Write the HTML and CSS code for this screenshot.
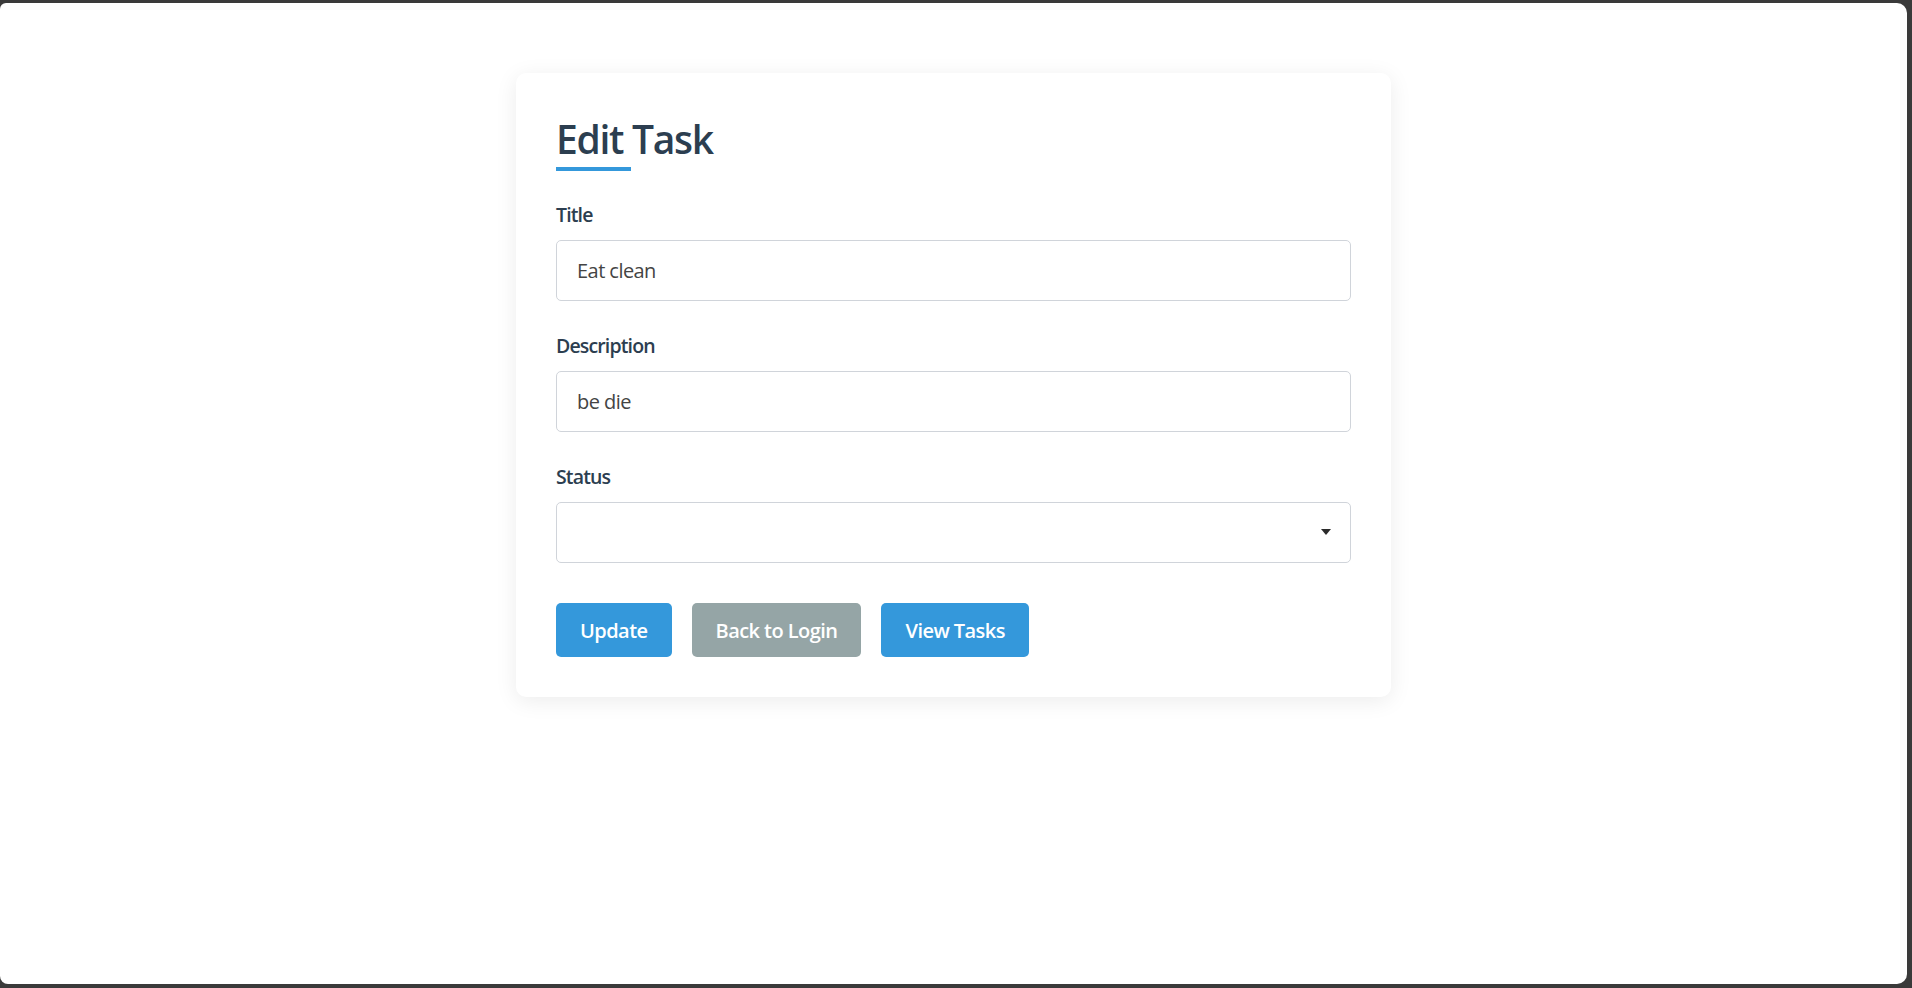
FILE: index.html
```html
<!DOCTYPE html>
<html lang="en">
<head>
<meta charset="utf-8">
<title>Edit Task</title>
<link rel="stylesheet" href="styles.css">
</head>
<body>
<div class="window">
  <main class="page">
    <section class="card">
      <h1 class="card-title">Edit Task</h1>
      <form class="form">
        <div class="form-group">
          <label class="form-label" for="title">Title</label>
          <input class="form-control" id="title" type="text" value="Eat clean">
        </div>
        <div class="form-group">
          <label class="form-label" for="desc">Description</label>
          <input class="form-control" id="desc" type="text" value="be die">
        </div>
        <div class="form-group">
          <label class="form-label" for="status">Status</label>
          <div class="select-wrap">
            <select class="form-control form-select" id="status">
              <option value=""></option>
            </select>
            <svg class="select-arrow" width="10" height="6" viewBox="0 0 10 6"><path d="M0 0H10L5 6Z" fill="#2b2b2b"/></svg>
          </div>
        </div>
        <div class="actions">
          <button type="button" class="btn btn-primary">Update</button>
          <button type="button" class="btn btn-secondary">Back to Login</button>
          <button type="button" class="btn btn-primary">View Tasks</button>
        </div>
      </form>
    </section>
  </main>
</div>
</body>
</html>
```
FILE: styles.css
```css
* { box-sizing: border-box; }
html, body { margin: 0; height: 100%; }
html { background: #3a3a3a; }
body {
  padding: 3px 5px 4px 0;
  font-family: "Open Sans", "Noto Sans", sans-serif;
  color: #2c3e50;
}
.window {
  height: 100%;
  background: #ffffff;
  border-radius: 6px 10px 10px 8px;
  overflow: hidden;
}
.page {
  padding-top: 70px;
  display: flex;
  justify-content: center;
}
.card {
  width: 875px;
  padding: 40px;
  background: #fff;
  border-radius: 10px;
  box-shadow: 0 4px 22px rgba(0, 0, 0, 0.08);
}
.card-title {
  margin: 0 0 29px;
  padding-top: 2px;
  font-size: 39px;
  line-height: 47px;
  font-weight: 600;
  letter-spacing: -1.3px;
  color: #2c3e50;
}
.card-title::after {
  content: "";
  display: block;
  width: 75px;
  height: 4px;
  margin-top: 5px;
  background: #3498db;
}
.form-group { margin-bottom: 30px; }
.form-label {
  display: block;
  margin-bottom: 10px;
  font-size: 19.5px;
  line-height: 30px;
  font-weight: 600;
  letter-spacing: -0.85px;
  color: #2c3e50;
}
.form-control {
  display: block;
  width: 100%;
  height: 61px;
  padding: 0 20px;
  border: 1px solid #d0d4da;
  border-radius: 5px;
  background: #fff;
  font-family: inherit;
  font-size: 20px;
  letter-spacing: -0.55px;
  color: #444;
  outline: none;
}
.select-wrap { position: relative; }
.form-select { appearance: none; -webkit-appearance: none; }
.select-arrow {
  position: absolute;
  right: 20px;
  top: 27px;
  pointer-events: none;
}
.actions {
  display: flex;
  gap: 20px;
  padding-top: 10px;
}
.btn {
  height: 54px;
  padding: 0 24px;
  border: none;
  border-radius: 5px;
  font-family: inherit;
  font-size: 20px;
  font-weight: 600;
  letter-spacing: -0.55px;
  color: #fff;
}
.btn-primary { background: #3498db; }
.btn-secondary { background: #95a5a6; }
```
